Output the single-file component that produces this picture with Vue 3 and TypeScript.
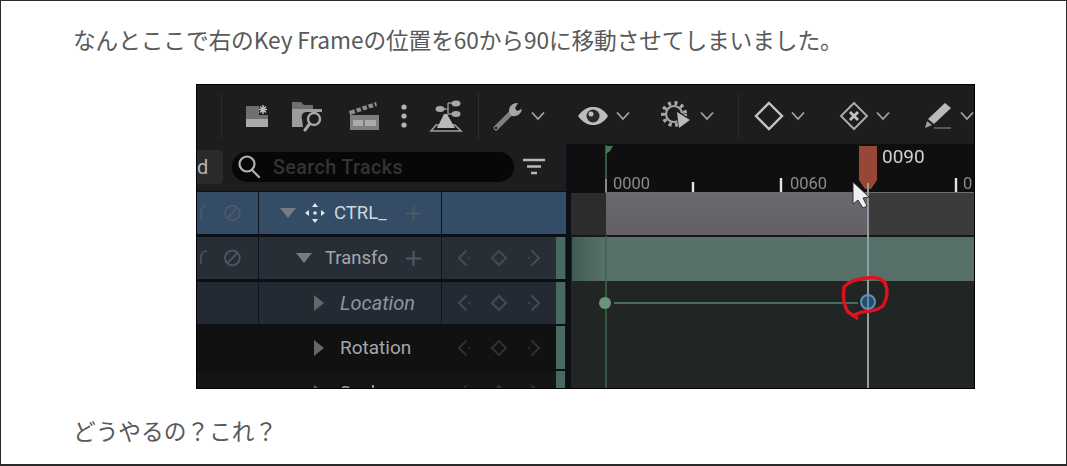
<script setup lang="ts">
interface Row { id: string; label: string; tone: string; tri: 'down' | 'right'; move?: boolean; plus?: boolean; keys?: boolean; ban?: boolean; strip?: boolean }
const rows: Row[] = [
  { id: 'r0', label: 'CTRL_', tone: 'blue', tri: 'down', move: true, plus: true, ban: true },
  { id: 'r1', label: 'Transfo', tone: 'slate', tri: 'down', plus: true, keys: true, ban: true, strip: true },
  { id: 'r2', label: 'Location', tone: 'slate2', tri: 'right', keys: true, strip: true },
  { id: 'r3', label: 'Rotation', tone: 'black', tri: 'right', keys: true, strip: true },
  { id: 'r4', label: 'Scale', tone: 'black2', tri: 'right', keys: true, strip: true },
]
</script>

<template>
  <div class="page">
    <p class="line first">なんとここで右のKey Frameの位置を60から90に移動させてしまいました。</p>
    <div class="shot">
      <div class="inner">
        <div class="toolbar">
          <span class="sep s1"></span>
          <svg class="ic m23" width="24" height="24" viewBox="0 0 24 24"><path d="M1 2h22v21H1z" fill="#6f6f6f"/><rect x="1" y="15" width="22" height="8" fill="#a9a9a9"/><path d="M14 0h10v11H14z" fill="#1d1d1d"/><path d="M18 1v9M14 5.500h8M15 2.500l6 6M21 2.500l-6 6" stroke="#bdbdbd" stroke-width="1.500"/></svg>
          <svg class="ic m23" width="32" height="32" viewBox="0 0 32 32"><path d="M0 2h9l3 3h9v4H0z" fill="#6f6f6f"/><path d="M0 9h30v3H14a5 5 0 0 0-4 7l1 8H0z" fill="#9c9c9c"/><circle cx="22" cy="19" r="6" fill="#1d1d1d" stroke="#a8a8a8" stroke-width="2.400"/><path d="M17.500 24 13 30" stroke="#a8a8a8" stroke-width="3" stroke-linecap="round"/></svg>
          <svg class="ic m24" width="32" height="32" viewBox="0 0 32 32"><path d="M1 11 28 2l1 4L2 15z" fill="#8c8c8c"/><path d="M7 9l2 5M13 7l2 5M19 5l2 5M25 3l2 5" stroke="#1d1d1d" stroke-width="2"/><rect x="2" y="15" width="29" height="15" fill="#7f7f7f"/><rect x="5" y="20" width="10" height="6" fill="#ababab"/><rect x="17" y="20" width="11" height="6" fill="#ababab"/></svg>
          <svg class="ic m20" width="8" height="32" viewBox="0 0 8 32"><circle cx="4" cy="7" r="2.600" fill="#b4b4b4"/><circle cx="4" cy="16" r="2.600" fill="#b4b4b4"/><circle cx="4" cy="25" r="2.600" fill="#b4b4b4"/></svg>
          <svg class="ic m21" width="34" height="34" viewBox="0 0 34 34"><path d="M2 32 7 26h19l6 6z" fill="none" stroke="#9c9c9c" stroke-width="1.600"/><path d="M8 29l7-14h3l8 14z" fill="#b8b8b8"/><path d="M10 10h10M19 4v12M19 4h6M19 15h6" stroke="#8c8c8c" stroke-width="1.500" fill="none"/><ellipse cx="11" cy="10" rx="4.500" ry="3" fill="#a8a8a8"/><ellipse cx="27" cy="4.500" rx="4.500" ry="3" fill="#a8a8a8"/><ellipse cx="27" cy="15" rx="4.500" ry="3" fill="#a8a8a8"/></svg>
          <span class="sep s2 m15"></span>
          <svg class="ic m13" width="32" height="32" viewBox="0 0 32 32"><path d="M4 28 19 13" stroke="#7f7f7f" stroke-width="5" stroke-linecap="round"/><circle cx="4" cy="28" r="1.300" fill="#1d1d1d"/><path d="M26 3a8 8 0 0 0-9 7 6 6 0 0 0 3 6 8 8 0 0 0 10-7l-5 2-2-3z" fill="#a6a6a6"/></svg>
          <svg class="ic m7" width="14" height="10" viewBox="0 0 14 10"><path d="M1 1.500 7 8l6-6.500" class="chev"/></svg>
          <svg class="ic m32" width="32" height="20" viewBox="0 0 32 20"><path d="M1 10C7 2 12 1 16 1s10 1 15 9c-5 8-11 9-15 9S7 18 1 10z" fill="#bdbdbd"/><circle cx="16" cy="10" r="6.500" fill="#2a2a2a"/><circle cx="14" cy="8" r="2.500" fill="#bdbdbd"/></svg>
          <svg class="ic m7" width="14" height="10" viewBox="0 0 14 10"><path d="M1 1.500 7 8l6-6.500" class="chev"/></svg>
          <svg class="ic m31" width="32" height="30" viewBox="0 0 32 30"><circle cx="13" cy="13" r="8" fill="none" stroke="#a8a8a8" stroke-width="2.200"/><circle cx="13" cy="13" r="11" fill="none" stroke="#a8a8a8" stroke-width="4" stroke-dasharray="3 3.500"/><path d="M14 8l17 11-13 10z" fill="#1d1d1d"/><path d="M16 11l13 8-11 8z" fill="#bababa"/></svg>
          <svg class="ic m7" width="14" height="10" viewBox="0 0 14 10"><path d="M1 1.500 7 8l6-6.500" class="chev"/></svg>
          <span class="sep s3 m24"></span>
          <svg class="ic m15" width="30" height="30" viewBox="0 0 30 30"><path d="M15 2 28 15 15 28 2 15z" fill="none" stroke="#c4c4c4" stroke-width="2.400"/></svg>
          <svg class="ic m7" width="14" height="10" viewBox="0 0 14 10"><path d="M1 1.500 7 8l6-6.500" class="chev"/></svg>
          <svg class="ic m34" width="30" height="30" viewBox="0 0 30 30"><path d="M15 2 28 15 15 28 2 15z" fill="none" stroke="#a8a8a8" stroke-width="2"/><path d="M11 11l8 8M19 11l-8 8" stroke="#c4c4c4" stroke-width="2.800"/></svg>
          <svg class="ic m7" width="14" height="10" viewBox="0 0 14 10"><path d="M1 1.500 7 8l6-6.500" class="chev"/></svg>
          <svg class="ic m33" width="30" height="30" viewBox="0 0 30 30"><path d="M22 2l6 5L11 23l-6-5z" fill="#bababa"/><path d="M4 20l5 4-7 3z" fill="#a0a0a0"/><path d="M11 27h17" stroke="#6a6a6a" stroke-width="1.500"/></svg>
          <svg class="ic m7" width="14" height="10" viewBox="0 0 14 10"><path d="M1 1.500 7 8l6-6.500" class="chev"/></svg>
        </div>

        <div class="main">
          <div class="outliner">
            <div class="searchbar">
              <div class="add"><span>d</span></div>
              <div class="pill">
                <svg width="26" height="26" viewBox="0 0 26 26"><circle cx="11" cy="10" r="7.500" fill="none" stroke="#b4b4b4" stroke-width="2.200"/><path d="M16 16l7 7" stroke="#b4b4b4" stroke-width="2.200" stroke-linecap="round"/></svg>
                <span class="ph">Search Tracks</span>
              </div>
              <svg class="filter" width="24" height="22" viewBox="0 0 24 22"><path d="M1 4h22M5 10.500h14M9 17h6" stroke="#b8b8b8" stroke-width="2.400"/></svg>
            </div>
            <div v-for="r in rows" :key="r.id" class="row" :class="[r.id, r.tone]">
              <div class="cell c1">
                <svg v-if="r.ban" width="62" height="24" viewBox="0 0 62 24"><path d="M4 18V10a6 6 0 0 1 6-5" fill="none" stroke="#4d5a6a" stroke-width="1.500"/><circle cx="36" cy="12" r="7.500" fill="none" stroke="#4f5964" stroke-width="1.800"/><path d="M31 17l10-10" stroke="#4f5964" stroke-width="1.800"/></svg>
              </div>
              <div class="cell c2">
                <svg v-if="r.tri === 'down'" class="tri" width="16" height="10" viewBox="0 0 16 10"><path d="M0 0h16L8 10z" fill="#767c84"/></svg>
                <svg v-else class="tri" width="10" height="16" viewBox="0 0 10 16"><path d="M0 0l10 8-10 8z" fill="#666"/></svg>
                <svg v-if="r.move" class="move" width="22" height="22" viewBox="0 0 22 22"><g fill="#dfe6ee"><circle cx="11" cy="11" r="1.800"/><path d="M11 1l3 4H8zM11 21l3-4H8zM1 11l4-3v6zM21 11l-4-3v6z"/></g></svg>
                <span class="label">{{ r.label }}</span>
                <svg v-if="r.plus" class="plus" width="17" height="17" viewBox="0 0 17 17"><path d="M8.500 1v15M1 8.500h15" stroke="#4d5967" stroke-width="2"/></svg>
              </div>
              <div class="cell c3">
                <template v-if="r.keys">
                  <svg width="18" height="18" viewBox="0 0 18 18"><path d="M9 2 2 9l7 7M12 9h.1" fill="none" stroke="#454b54" stroke-width="2" stroke-linecap="round"/></svg>
                  <svg width="18" height="18" viewBox="0 0 18 18"><path d="M9 2l7 7-7 7-7-7z" fill="none" stroke="#454b54" stroke-width="2"/></svg>
                  <svg width="18" height="18" viewBox="0 0 18 18"><path d="M9 2l7 7-7 7M6 9h.1" fill="none" stroke="#454b54" stroke-width="2" stroke-linecap="round"/></svg>
                </template>
              </div>
              <div class="cell c4" :class="{ on: r.strip }"></div>
            </div>
          </div>

          <div class="timeline">
            <div class="ruler"></div>
            <div class="track t1"><i class="before"></i><i class="range"></i><i class="after"></i></div>
            <div class="track t2"></div>
            <div class="track t3"></div>
            <svg class="overlay" width="404" height="245" viewBox="570 144 404 245">
              <path d="M606 145V192" stroke="#2f5a40" stroke-width="2"/>
              <path d="M606 236V388" stroke="#3a6350" stroke-width="1.600"/>
              <path d="M606 146h7l-3 5-4 3z" fill="#3f7a52"/>
              <path d="M605 192.500H974" stroke="#6e6e6e" stroke-width="1"/>
              <path d="M606 179v13" stroke="#8a8a8a" stroke-width="2"/>
              <path d="M693 182v10M781 178v14M956 178v14" stroke="#e4e4e4" stroke-width="2.400"/>
              <text x="613" y="189" class="tick">0000</text>
              <text x="790" y="189" class="tick">0060</text>
              <text x="963" y="189" class="tick">0</text>
              <text x="882" y="162.500" class="now">0090</text>
              <path d="M859 146h18v34l-6 9h-6l-6-9z" fill="#984736"/>
              <path d="M868 183V388" stroke="#8a9f9e" stroke-width="2"/>
              <path d="M614 303H858" stroke="#446f5e" stroke-width="2"/>
              <circle cx="605" cy="303" r="6" fill="#69967a"/>
              <circle cx="868" cy="302" r="7" fill="#234e70" stroke="#5f8fb4" stroke-width="2"/>
              <path d="M868 295v14" stroke="#7fa0b0" stroke-width="1.500"/>
              <path d="M857 318 848 312Q842 303 844 287 851 279 867 278 880 276 885 283 890 294 883 306 875 312 862 312L854 315" fill="none" stroke="#e0101c" stroke-width="3.400" stroke-linecap="round" stroke-linejoin="round"/>
              <path d="M853 182v22l5-4 5 8 4-2-4-8 6-1z" fill="#f0f0f0" stroke="#333" stroke-width="1"/>
            </svg>
          </div>
        </div>
      </div>
    </div>
    <p class="line last">どうやるの？これ？</p>
  </div>
</template>

<style>
html, body { margin: 0; overflow: hidden; background: #fff; }
</style>

<style scoped>
.page {
  width: 1067px;
  height: 466px;
  box-sizing: border-box;
  border: 1px solid #2b2b2b;
  border-bottom-width: 2px;
  background: #fff;
  overflow: hidden;
}
.line {
  margin: 0;
  padding-left: 72px;
  height: 32px;
  line-height: 32px;
  font-family: "Noto Sans CJK JP", "Open Sans", sans-serif;
  font-size: 22.7px;
  color: #595959;
  white-space: nowrap;
}
.first { margin-top: 23px; letter-spacing: -0.1px; }
.last { margin-top: 26px; }
.shot {
  width: 779px;
  height: 305px;
  margin: 28px 0 0 195px;
  box-sizing: border-box;
  border: 1px solid #000;
  overflow: hidden;
  background: #1c1c1c;
}
.inner {
  width: 777px;
  height: 303px;
  filter: blur(0.7px);
  font-family: Roboto, "Liberation Sans", sans-serif;
}
.toolbar {
  height: 59px;
  box-sizing: border-box;
  padding-top: 2px;
  display: flex;
  align-items: center;
  background: #1d1d1d;
  overflow: hidden;
}
.ic { flex: none; display: block; }
.chev { fill: none; stroke: #a4a4a4; stroke-width: 1.8; }
.sep { flex: none; width: 1px; height: 46px; background: #2c2c2c; }
.s1 { margin-left: 24px; }
.m7 { margin-left: 7px; }
.m13 { margin-left: 13px; }
.m15 { margin-left: 15px; }
.m20 { margin-left: 20px; }
.m21 { margin-left: 21px; }
.m23 { margin-left: 23px; }
.m24 { margin-left: 24px; }
.m31 { margin-left: 31px; }
.m32 { margin-left: 32px; }
.m33 { margin-left: 33px; }
.m34 { margin-left: 34px; }

.main { display: flex; height: 244px; background: #0c0f13; }
.outliner { width: 369px; flex: none; background: #0c0f13; }
.searchbar { height: 47px; box-sizing: border-box; padding-bottom: 1px; display: flex; align-items: center; background: #1d1d1d; }
.add {
  width: 26px;
  height: 34px;
  background: #2a2a2a;
  border-radius: 0 4px 4px 0;
  color: #b4b4b4;
  font-size: 20px;
  line-height: 34px;
  text-align: right;
  overflow: hidden;
}
.add span { display: inline-block; margin-right: 18px; }
.pill {
  width: 282px;
  height: 30px;
  margin-left: 9px;
  box-sizing: border-box;
  padding-left: 4px;
  display: flex;
  align-items: center;
  background: #070707;
  border-radius: 15px;
}
.ph { margin-left: 11px; color: #343434; font-size: 19.7px; font-weight: 500; letter-spacing: 0.4px; }
.filter { margin-left: 8px; flex: none; }

.row {
  height: 43px;
  margin-bottom: 2px;
  display: grid;
  grid-template-columns: 61px 183px 115px 9px;
  overflow: hidden;
}
.cell { display: flex; align-items: center; min-width: 0; height: 100%; }
.c2, .c3 { border-left: 1px solid #0b1420; box-sizing: border-box; }
.c3 { justify-content: center; gap: 15px; }
.blue { background: #354c67; }
.slate { background: #282e36; }
.slate2 { background: #242a33; }
.black { background: #111111; }
.black2 { background: #151515; }
.black .c2, .black .c3, .black2 .c2, .black2 .c3 { border-left-color: #111; }
.black .c3 svg, .black2 .c3 svg { opacity: 0.55; }
.c4.on { background: #486a61; }
.r0 { margin-top: 1px; height: 42px; margin-bottom: 3px; }
.r1 { height: 42px; margin-bottom: 3px; }
.r2 { height: 42px; }
.r0 .c2 { padding-left: 21px; }
.r1 .c2 { padding-left: 37px; }
.r2 .c2, .r3 .c2, .r4 .c2 { padding-left: 55px; }
.tri { flex: none; }
.move { margin-left: 8px; flex: none; }
.label { font-size: 18.5px; color: #a3a7ac; white-space: nowrap; margin-left: 16px; }
.r0 .label { color: #cdd6df; margin-left: 8px; }
.r1 .label { margin-left: 13px; }
.r2 .label { font-style: italic; color: #90949a; font-size: 20px; }
.r3 .label { font-size: 19px; }
.plus { margin-left: auto; margin-right: 19px; flex: none; }

.timeline { position: relative; flex: none; width: 403px; margin-left: 5px; background: #1e2322; }
.ruler { height: 49px; background: #0f0f0f; }
.track { display: flex; }
.t1 { height: 44px; background: #171717; }
.t1 i { display: block; height: 42px; }
.before { width: 35px; background: #2c2c2c; }
.range { width: 262px; background: linear-gradient(#6b6870, #625f67); }
.after { flex: 1; background: #3b3b3b; }
.t2 { height: 44px; margin-left: 1px; background: linear-gradient(90deg, #425a54, #577169 8%, #567069); }
.t3 { height: 107px; background: #212625; }
.overlay { position: absolute; left: -1px; top: 0; display: block; }
.tick { font: 16.5px Roboto, sans-serif; fill: #8b8b8b; }
.now { font: 19px Roboto, sans-serif; fill: #d0d0d0; }
</style>
